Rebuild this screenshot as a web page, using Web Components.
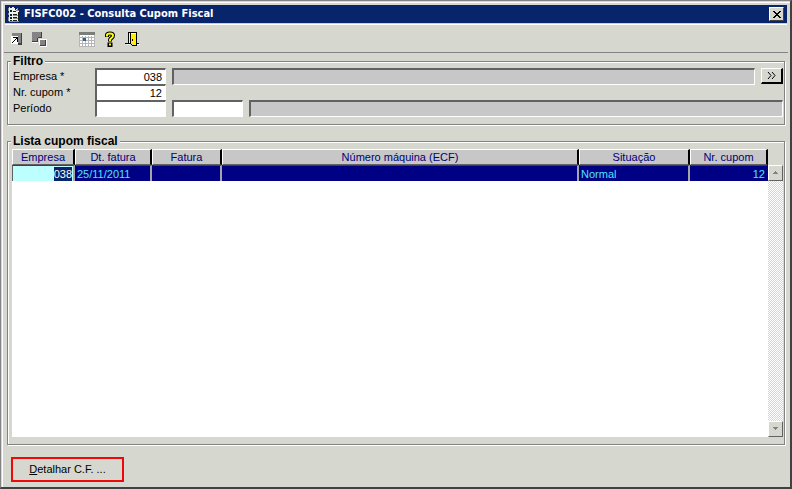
<!DOCTYPE html>
<html lang="pt-BR">
<head>
<meta charset="utf-8">
<meta name="viewport" content="width=device-width, initial-scale=1">
<title>FISFC002 - Consulta Cupom Fiscal</title>
<style>
  html, body { height: 100%; margin: 0; }
  body { background: #d6d7ce; color: #000; font: 11px/16px "Liberation Sans", Arial, sans-serif; }
</style>
</head>
<body>
<app-window>
  <span slot="title">FISFC002 - Consulta Cupom Fiscal</span>
  <tool-bar></tool-bar>
  <group-box>
    <span slot="legend">Filtro</span>
    <filter-form></filter-form>
  </group-box>
  <group-box class="fill" fill>
    <span slot="legend">Lista cupom fiscal</span>
    <receipt-grid></receipt-grid>
  </group-box>
  <detail-button slot="footer"><u>D</u>etalhar C.F. ...</detail-button>
</app-window>

<script>
class BaseElement extends HTMLElement {
  constructor() {
    super();
    const template = document.createElement('template');
    template.innerHTML = this.constructor.template;
    this.attachShadow({ mode: 'open' }).appendChild(template.content.cloneNode(true));
  }
}

class AppWindow extends BaseElement {
  static template = `
    <style>
      :host { display: flex; flex-direction: column; box-sizing: border-box; min-height: 100vh; padding: 3px 2px 2px 3px; background: #d6d7ce; border: 1px solid #848284; border-right: 2px solid #424142; border-bottom: 2px solid #424142; box-shadow: inset 1px 1px #d6d7ce, inset 2px 2px #fff; }
      header { display: flex; align-items: center; gap: 4px; height: 18px; margin: 1px; padding: 0 3px; background: #08246b; color: #fff; box-shadow: 0 1px #c6cfde, 0 2px #fff; }
      h1 { flex: 1; margin: 0; font: bold 11px/18px "DejaVu Sans Condensed", Tahoma, sans-serif; }
      svg { display: block; }
      .close { display: grid; place-items: center; box-sizing: border-box; width: 15px; height: 14px; padding: 0; background: #d6d7ce; border: 1px solid; border-color: #fff #424142 #424142 #fff; }
      main { flex: 1; display: flex; flex-direction: column; gap: 9px; }
      ::slotted(.fill) { flex: 1; }
      footer { padding: 12px 7px 3px; }
    </style>
    <header>
      <svg width="12" height="16" viewBox="0 0 12 16" shape-rendering="crispEdges" aria-hidden="true">
        <path fill="#eff3ef" d="M1 1h7v2h2v2h1v11H1z"/>
        <path fill="#8c8e8c" d="M0 2h1v3H0zM0 7h1v2H0zM0 11h1v4H0zM9 2h1v2H9zM8 4h3v1H8zM5 9h5v1H5zM5 12h5v1H5zM1 15h10v1H1z"/>
        <path fill="#182018" d="M2 1h2v1H2zM6 1h2v1H6zM2 4h2v2H2zM5 5h3v1H5zM7 2h1v2H7zM2 8h2v2H2zM5 8h4v1H5zM2 11h2v2H2zM5 11h4v1H5zM2 14h2v1H2zM5 14h4v1H5zM10 6h1v9h-1z"/>
      </svg>
      <h1><slot name="title"></slot></h1>
      <button class="close" type="button" aria-label="Fechar">
        <svg width="8" height="7" viewBox="0 0 8 7" shape-rendering="crispEdges"><path d="M0 0h2v1H0zM6 0h2v1H6zM1 1h2v1H1zM5 1h2v1H5zM2 2h4v1H2zM3 3h2v1H3zM2 4h4v1H2zM1 5h2v1H1zM5 5h2v1H5zM0 6h2v1H0zM6 6h2v1H6z"/></svg>
      </button>
    </header>
    <main><slot></slot></main>
    <footer><slot name="footer"></slot></footer>
  `;
}

class ToolBar extends BaseElement {
  static template = `
    <style>
      :host { display: flex; align-items: center; height: 26px; margin: 2px 0 -8px; padding: 0 1px; border-bottom: 1px solid #848284; }
      button { width: 23px; height: 24px; padding: 0; border: 0; background: none; display: grid; place-items: center; }
      .gap { width: 24px; }
      svg { display: block; }
    </style>
    <button type="button" aria-label="Confirmar">
      <svg width="14" height="14" viewBox="0 0 14 14" shape-rendering="crispEdges">
        <path fill="#fff" d="M1 4h7v8H1z"/>
        <path fill="#848284" d="M2 1h9v11H8V4H2z"/>
        <path fill="#424142" d="M11 1h1v12h-1zM8 11h3v2H8z"/>
        <path d="M3 5h5v5H7V7H6v1H5v1H4v1H3v1H2v-1h1V9h1V8h1V7h1V6H3z"/>
      </svg>
    </button>
    <button type="button" aria-label="Limpar">
      <svg width="15" height="15" viewBox="0 0 15 15" shape-rendering="crispEdges">
        <path fill="#848284" d="M0 0h10v6H6v4H0z"/>
        <path fill="#424142" d="M9 0h1v6H9zM0 9h6v1H0zM6 5h4v1H6zM5 6h1v4H5z"/>
        <path fill="#fff" d="M0 10h6v1H0zM7 7h7v1H7zM7 7h1v6H7zM14 7h1v8H8v-1h6z"/>
        <path fill="#848284" d="M8 8h5v5H8z"/>
        <path fill="#424142" d="M13 8h1v6H8v-1h5z"/>
      </svg>
    </button>
    <span class="gap"></span>
    <button type="button" aria-label="Calendário">
      <svg width="16" height="15" viewBox="0 0 16 15" shape-rendering="crispEdges">
        <path fill="#fff" d="M0 0h16v15H0z"/>
        <path fill="#7b7d7b" d="M0 0h16v3H0z"/>
        <path fill="#b5b6b5" d="M3 4h1v10H3zM6 4h1v10H6zM9 4h1v10H9zM12 4h1v10h-1zM0 5h16v1H0zM0 8h16v1H0zM0 11h16v1H0zM0 14h16v1H0zM0 3h1v12H0zM15 3h1v12h-1z"/>
        <path fill="#31618c" d="M4 6h3v3H4z"/>
      </svg>
    </button>
    <button type="button" aria-label="Ajuda">
      <svg width="12" height="16" viewBox="0 0 12 16">
        <path fill="none" stroke="#000" stroke-width="4" d="M3 6V4Q3 2.500 6 2.500T9 4.500Q9 6 7.500 7T6 9V10.500"/>
        <path d="M3.500 11.500h5V16h-5z"/>
        <path fill="none" stroke="#ffff00" stroke-width="2" d="M3 5.500V4Q3 2.500 6 2.500T9 4.500Q9 6 7.500 7T6 9V10"/>
        <path fill="#ffff00" d="M5 12.500h2v2H5z"/>
      </svg>
    </button>
    <button type="button" aria-label="Sair">
      <svg width="16" height="16" viewBox="0 0 16 16" shape-rendering="crispEdges">
        <path d="M3 1h9v12H3zM0 12h14v1H0z"/>
        <path fill="#eff3ef" d="M4 2h1v10H4zM1 13h4v1H1zM12 13h3v1h-3z"/>
        <path d="M5 1h3v1H5zM5 2h1v11H5zM6 13h1v1H6zM7 14h5v1H7zM11 2h1v13h-1z"/>
        <path fill="#ffef00" d="M6 2h1v1h4v11H8v-1H6z"/>
        <path fill="#fff" d="M6 2h5v1H6z"/>
        <path d="M7 8h1v2H7z"/>
      </svg>
    </button>
  `;
}

class GroupBox extends BaseElement {
  static template = `
    <style>
      :host { display: flex; margin: 0 3px; }
      fieldset { flex: 1; display: flex; min-width: 0; margin: 0; padding: 0 1px 8px 4px; border: 1px solid #848284; box-shadow: 1px 1px #fff, inset 1px 1px #fff; }
      :host([fill]) fieldset { padding-top: 1px; padding-bottom: 7px; }
      legend { margin-left: -1px; padding: 0 2px; background: #d6d7ce; font-size: 12px; line-height: 14px; font-weight: bold; }
      ::slotted(:not([slot])) { flex: 1; min-width: 0; }
    </style>
    <fieldset>
      <legend><slot name="legend"></slot></legend>
      <slot></slot>
    </fieldset>
  `;
}

class FilterForm extends BaseElement {
  static template = `
    <style>
      :host { display: block; }
      form { display: grid; margin: 0; padding-left: 1px; }
      .row { display: flex; align-items: center; gap: 6px; height: 16px; }
      label { width: 76px; }
      input { box-sizing: border-box; width: 71px; height: 17px; margin: 0; padding: 1px 3px 0; border: 1px solid; border-width: 2px 1px 1px 2px; border-color: #636163 #fff #fff #636163; border-radius: 0; background: #fff; color: #000; font: inherit; line-height: 13px; outline: 0; }
      .number { text-align: right; }
      .wide { flex: 1; min-width: 0; background: #c6c7c6; }
      button { box-sizing: border-box; width: 22px; height: 16px; padding: 0; display: grid; place-items: center; background: #d6d7ce; border: 1px solid; border-width: 1px 2px 2px 1px; border-color: #fff #000 #000 #fff; }
    </style>
    <form>
      <div class="row">
        <label for="company">Empresa *</label>
        <input id="company" class="number" value="038">
        <input class="wide" aria-label="Nome da empresa" readonly>
        <button type="button" aria-label="Avançar">
          <svg width="9" height="7" viewBox="0 0 9 7"><path fill="none" stroke="#000" d="M1 0l3 3.500L1 7M5 0l3 3.500L5 7"/></svg>
        </button>
      </div>
      <div class="row">
        <label for="receipt">Nr. cupom *</label>
        <input id="receipt" class="number" value="12">
      </div>
      <div class="row">
        <label for="start">Período</label>
        <input id="start">
        <input aria-label="Fim do período">
        <input class="wide" aria-label="Descrição do período" readonly>
      </div>
    </form>
  `;
}

class ReceiptGrid extends BaseElement {
  static template = `
    <style>
      :host { display: grid; grid-template-columns: 1fr 15px; background: linear-gradient(#fff, #fff) 0 16px no-repeat; }
      table { width: 100%; table-layout: fixed; border-collapse: separate; border-spacing: 0; align-self: start; }
      th, td { box-sizing: border-box; height: 16px; padding: 0 2px; line-height: 14px; white-space: nowrap; overflow: hidden; }
      th { background: #c6c7c6; color: #00007b; font-weight: normal; border: 1px solid; border-width: 1px 2px 1px 1px; border-color: #fff #000 #636163 #fff; }
      td { background: #000084; color: #4ae3ff; border: 1px solid; border-width: 1px 2px 0 1px; border-color: #424142 #a5a6a5 #000 #000084; padding: 0 1px; }
      td:last-child { border-right-color: #000084; }
      .number { text-align: right; }
      .active { background: #bdffff; border-left-color: #636163; }
      .active span { display: inline-block; background: #08246b; color: #fff; }
      .c1 { width: 63px; } .c2 { width: 77px; } .c3 { width: 70px; } .c5 { width: 111px; } .c6 { width: 78px; }
      .scroll { display: flex; flex-direction: column; justify-content: space-between; margin-top: 16px; background: repeating-conic-gradient(#fff 0 25%, #d6d7ce 0 50%) 0 0 / 2px 2px; }
      .scroll button { box-sizing: border-box; width: 15px; height: 16px; padding: 0; display: grid; place-items: center; background: #d6d7ce; border: 1px solid; border-color: #fff #636163 #636163 #fff; }
    </style>
    <table>
      <colgroup><col class="c1"><col class="c2"><col class="c3"><col><col class="c5"><col class="c6"></colgroup>
      <thead>
        <tr><th>Empresa</th><th>Dt. fatura</th><th>Fatura</th><th>Número máquina (ECF)</th><th>Situação</th><th>Nr. cupom</th></tr>
      </thead>
      <tbody>
        <tr><td class="number active"><span>038</span></td><td>25/11/2011</td><td></td><td></td><td>Normal</td><td class="number">12</td></tr>
      </tbody>
    </table>
    <div class="scroll">
      <button type="button" aria-label="Rolar para cima"><svg width="7" height="4" viewBox="0 0 7 4" shape-rendering="crispEdges"><path fill="#848284" d="M3 0h1v1H3zM2 1h3v1H2zM1 2h5v1H1z"/></svg></button>
      <button type="button" aria-label="Rolar para baixo"><svg width="7" height="4" viewBox="0 0 7 4" shape-rendering="crispEdges"><path fill="#848284" d="M1 0h5v1H1zM2 1h3v1H2zM3 2h1v1H3z"/></svg></button>
    </div>
  `;
}

class DetailButton extends BaseElement {
  static template = `
    <style>
      :host { display: block; }
      button { box-sizing: border-box; min-width: 113px; height: 25px; padding: 0 8px 2px; background: transparent; border: 2px solid #f00808; border-radius: 0; color: #000; font: inherit; display: block; }
    </style>
    <button type="button"><slot></slot></button>
  `;
}

customElements.define('app-window', AppWindow);
customElements.define('tool-bar', ToolBar);
customElements.define('group-box', GroupBox);
customElements.define('filter-form', FilterForm);
customElements.define('receipt-grid', ReceiptGrid);
customElements.define('detail-button', DetailButton);
</script>
</body>
</html>
